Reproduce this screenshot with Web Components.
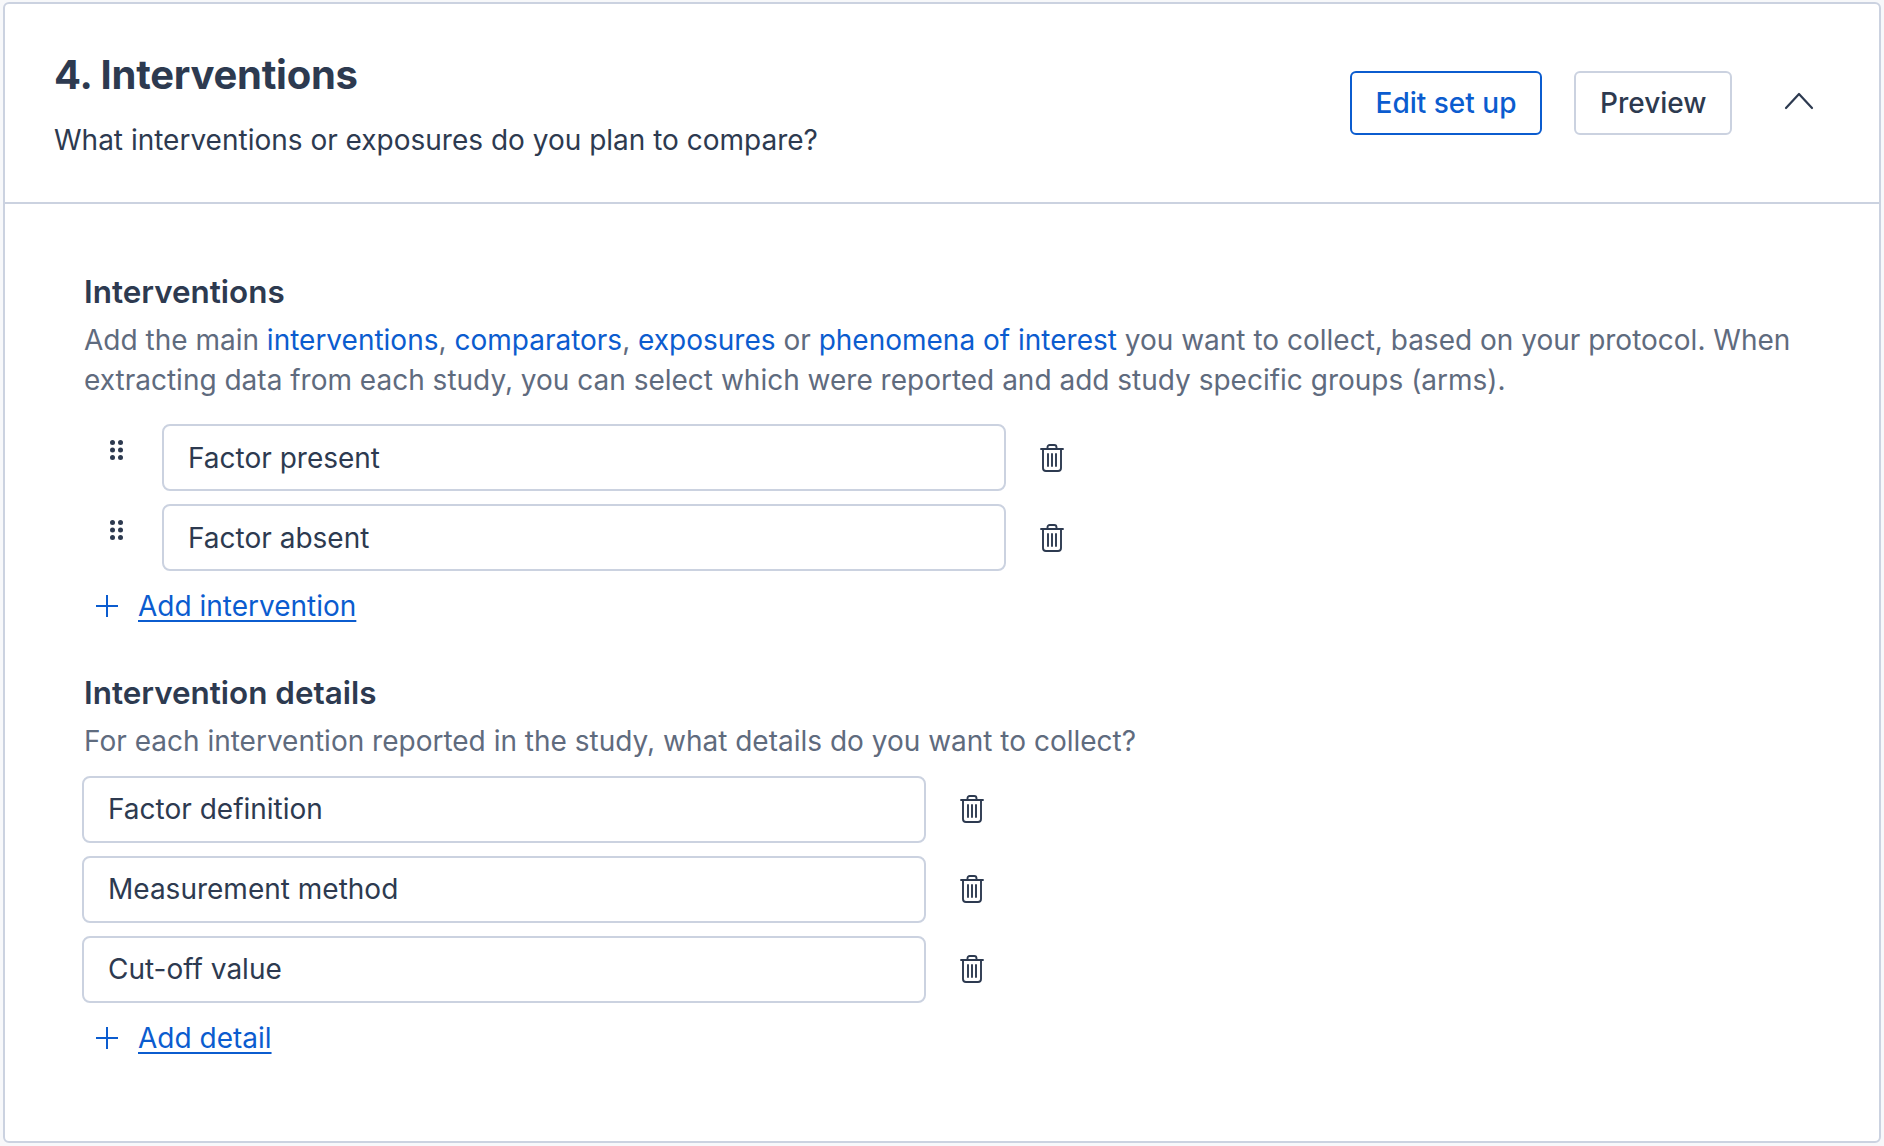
<!DOCTYPE html>
<html lang="en">
<head>
<meta charset="utf-8">
<title>Interventions</title>
<style>
  html, body { margin: 0; background: #f7f8fa; }
  body { padding: 2px 3px; font-family: Inter, "Liberation Sans", sans-serif; color: #2d3a50; }
</style>
</head>
<body>
<template id="trash-tpl">
  <style>
    :host { display: inline-flex; }
    svg { display: block; }
  </style>
  <svg width="24" height="28" viewBox="0 0 24 28" fill="none" stroke="#2d3a50" stroke-width="1.9" stroke-linecap="round" stroke-linejoin="round">
    <path d="M1 5h22"/>
    <path d="M7.5 5V3.4C7.5 2 8.4 1 9.8 1h4.4c1.4 0 2.3 1 2.3 2.4V5"/>
    <path d="M3 5v19c0 1.9 1.1 3 3 3h12c1.9 0 3-1.1 3-3V5"/>
    <path d="M8 10v12M12 10v12M16 10v12"/>
  </svg>
</template>

<section-card>
  <span slot="title">4. Interventions</span>
  <span slot="subtitle">What interventions or exposures do you plan to compare?</span>
  <action-button slot="actions" primary>Edit set up</action-button>
  <action-button slot="actions">Preview</action-button>

  <form-section heading="Interventions">
    <span slot="help">Add the main <a href="#">interventions</a>, <a href="#">comparators</a>, <a href="#">exposures</a> or <a href="#">phenomena of interest</a> <span>you want to collect, based on your protocol. When</span> <span>extracting data from each study, you can select which were reported and add study specific groups (arms).</span></span>
    <field-row draggable-row>Factor present</field-row>
    <field-row draggable-row>Factor absent</field-row>
    <add-link>Add intervention</add-link>
  </form-section>

  <form-section heading="Intervention details" class="second">
    <span slot="help">For each intervention reported in the study, what details do you want to collect?</span>
    <field-row>Factor definition</field-row>
    <field-row>Measurement method</field-row>
    <field-row>Cut-off value</field-row>
    <add-link>Add detail</add-link>
  </form-section>
</section-card>

<script>
class SectionCard extends HTMLElement {
  constructor() {
    super();
    this.attachShadow({ mode: "open" }).innerHTML = `
      <style>
        :host { display: block; box-sizing: border-box; width: 1878px; height: 1141px; background: #fff; border: 2px solid #cbd2e0; border-radius: 6px; }
        header { box-sizing: border-box; height: 200px; border-bottom: 2px solid #cbd2e0; padding: 48px 65px 0 49px; display: flex; justify-content: space-between; align-items: flex-start; }
        .title { font-size: 40px; line-height: 46px; font-weight: 700; letter-spacing: -0.25px; }
        .subtitle { margin-top: 22px; font-size: 28px; line-height: 40px; }
        .actions { display: flex; align-items: flex-start; margin-top: 19px; gap: 32px; }
        .chevron { margin: 21px 0 0 20px; display: block; }
        .body { padding: 67px 74px 0 79px; }
      </style>
      <header>
        <div>
          <div class="title"><slot name="title"></slot></div>
          <div class="subtitle"><slot name="subtitle"></slot></div>
        </div>
        <div class="actions">
          <slot name="actions"></slot>
          <svg class="chevron" width="30" height="18" viewBox="0 0 30 18" fill="none" stroke="#2d3a50" stroke-width="2.2" stroke-linecap="round" stroke-linejoin="round"><path d="M2 16 15 2l13 14"/></svg>
        </div>
      </header>
      <div class="body"><slot></slot></div>`;
  }
}

class ActionButton extends HTMLElement {
  constructor() {
    super();
    this.attachShadow({ mode: "open" }).innerHTML = `
      <style>
        :host { display: inline-flex; box-sizing: border-box; height: 64px; align-items: center; padding: 0 24px; border: 2px solid #cbd2e0; border-radius: 6px; font-size: 28px; font-weight: 500; color: #2d3a50; background: #fff; }
        :host(:not([primary])) { padding: 0 23.5px; }
        :host([primary]) { border-color: #0b5ccf; color: #0b5ccf; }
      </style>
      <slot></slot>`;
  }
}

class FormSection extends HTMLElement {
  constructor() {
    super();
    this.attachShadow({ mode: "open" }).innerHTML = `
      <style>
        :host { display: block; }
        :host(.second) { margin-top: 46px; }
        h3 { margin: 0; font-size: 31.4px; line-height: 42px; font-weight: 600; color: #2d3a50; }
        .help { margin: 7px 0 24px; font-size: 28px; line-height: 40px; color: #5f6b7e; }
        :host(.second) .help { margin-bottom: 14.5px; }
        ::slotted(span) { display: block; }
      </style>
      <h3></h3>
      <div class="help"><slot name="help"></slot></div>
      <slot></slot>`;
    this.shadowRoot.querySelector("h3").textContent = this.getAttribute("heading");
    // links in the help text live in the light DOM, so colour them from here
    this.querySelectorAll("a").forEach(a => {
      a.style.color = "#0b5ccf";
      a.style.textDecoration = "none";
    });
  }
}

class FieldRow extends HTMLElement {
  constructor() {
    super();
    const grip = this.hasAttribute("draggable-row");
    const dots = [6.5, 14.5].flatMap(x => [2.5, 10, 17.5].map(y => `<circle cx="${x}" cy="${y}" r="2.5"/>`)).join("");
    this.attachShadow({ mode: "open" }).innerHTML = `
      <style>
        :host { display: flex; align-items: flex-start; margin-bottom: 13px; }
        .grip { width: 78px; flex: none; padding: 16px 0 0 22px; box-sizing: border-box; }
        .grip svg { display: block; }
        .field { box-sizing: border-box; width: 844px; height: 67px; flex: none; display: flex; align-items: center; padding: 0 24px; border: 2px solid #cbd2e0; border-radius: 8px; font-size: 28px; background: #fff; margin-left: ${grip ? 0 : -2}px; }
        trash-icon { margin: ${grip ? 20 : 19}px 0 0 34px; }
      </style>
      ${grip ? `<div class="grip"><svg width="21" height="20" viewBox="0 0 21 20" fill="#2d3a50">${dots}</svg></div>` : ""}
      <div class="field"><slot></slot></div>
      <trash-icon></trash-icon>`;
  }
}

class TrashIcon extends HTMLElement {
  constructor() {
    super();
    const tpl = document.getElementById("trash-tpl");
    this.attachShadow({ mode: "open" }).appendChild(tpl.content.cloneNode(true));
  }
}

class AddLink extends HTMLElement {
  constructor() {
    super();
    this.attachShadow({ mode: "open" }).innerHTML = `
      <style>
        :host { display: flex; align-items: center; height: 40px; margin-top: 15px; font-size: 28px; color: #0b5ccf; padding-left: 12px; }
        svg { display: block; margin-right: 20px; }
        a { color: inherit; text-decoration: underline; text-underline-offset: 4px; text-decoration-thickness: 2px; }
      </style>
      <svg width="22" height="22" viewBox="0 0 22 22" fill="none" stroke="#0b5ccf" stroke-width="2"><path d="M11 0v22M0 11h22"/></svg>
      <a href="#"><slot></slot></a>`;
  }
}

customElements.define("trash-icon", TrashIcon);
customElements.define("section-card", SectionCard);
customElements.define("action-button", ActionButton);
customElements.define("form-section", FormSection);
customElements.define("field-row", FieldRow);
customElements.define("add-link", AddLink);
</script>
</body>
</html>
